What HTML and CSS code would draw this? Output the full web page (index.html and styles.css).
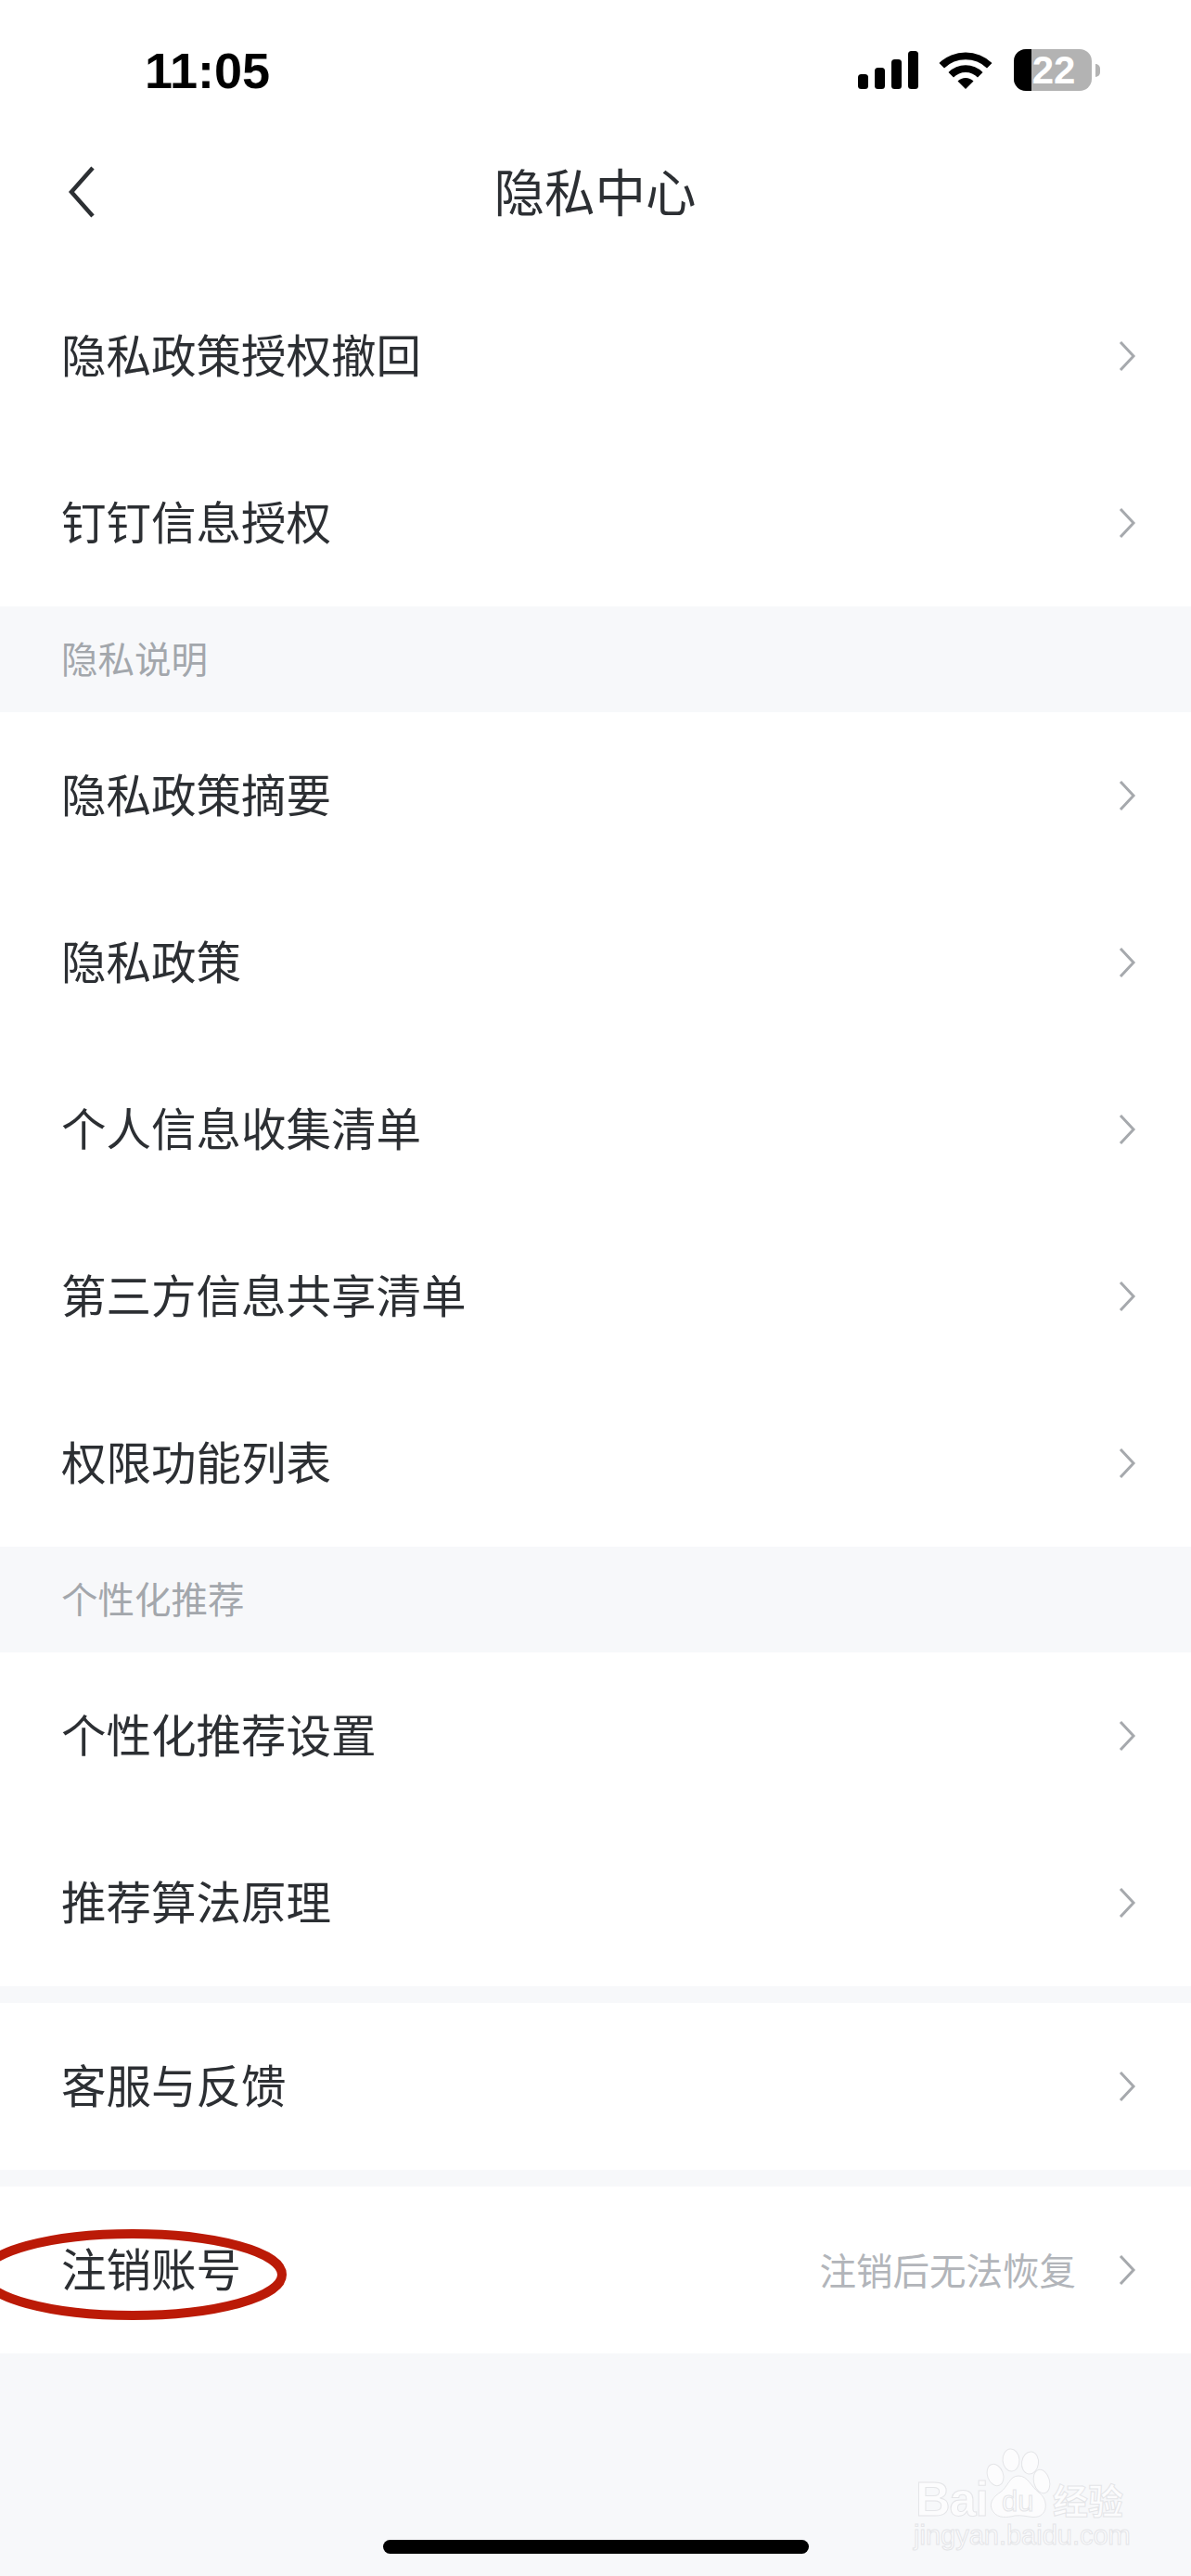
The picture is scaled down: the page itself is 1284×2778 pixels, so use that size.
FILE: index.html
```html
<!DOCTYPE html>
<html lang="zh-CN">
<head>
<meta charset="utf-8">
<title>隐私中心</title>
<link rel="stylesheet" href="styles.css">
</head>
<body>
<div class="page">
  <header class="status">
    <span class="time">11:05</span>
    <div class="status-icons">
      <svg class="signal" width="65" height="41" viewBox="0 0 65 41"><rect x="0" y="25" width="11" height="16" rx="3.5"/><rect x="18" y="18" width="11" height="23" rx="3.5"/><rect x="36" y="9" width="11" height="32" rx="3.5"/><rect x="54" y="0" width="11" height="41" rx="3.5"/></svg>
      <svg class="wifi" width="58" height="42" viewBox="0 0 58 42"><path d="M0.5 14 A41 41 0 0 1 57.5 14 L52 19.5 A33 33 0 0 0 6 19.5 Z"/><path d="M10.5 24 A26 26 0 0 1 47.500 24 L42 29.500 A18 18 0 0 0 16 29.500 Z"/><path d="M20.500 33.500 A12 12 0 0 1 37.500 33.500 L29 42 Z"/></svg>
      <div class="battery"><div class="battery-body"><div class="battery-fill"></div><span class="battery-text">22</span></div><div class="battery-nub"></div></div>
    </div>
  </header>
  <nav class="navbar">
    <svg class="back" width="30" height="56" viewBox="0 0 30 56"><path d="M27 2 L4 28 L27 54"/></svg>
    <h1 class="title">隐私中心</h1>
    <span></span>
  </nav>

  <section class="group">
    <div class="row"><span class="label">隐私政策授权撤回</span><svg class="chev" width="20" height="32" viewBox="0 0 20 32"><path d="M3 1 L17 16 L3 31"/></svg></div>
    <div class="row"><span class="label">钉钉信息授权</span><svg class="chev" width="20" height="32" viewBox="0 0 20 32"><path d="M3 1 L17 16 L3 31"/></svg></div>
  </section>
  <div class="section-title">隐私说明</div>
  <section class="group">
    <div class="row"><span class="label">隐私政策摘要</span><svg class="chev" width="20" height="32" viewBox="0 0 20 32"><path d="M3 1 L17 16 L3 31"/></svg></div>
    <div class="row"><span class="label">隐私政策</span><svg class="chev" width="20" height="32" viewBox="0 0 20 32"><path d="M3 1 L17 16 L3 31"/></svg></div>
    <div class="row"><span class="label">个人信息收集清单</span><svg class="chev" width="20" height="32" viewBox="0 0 20 32"><path d="M3 1 L17 16 L3 31"/></svg></div>
    <div class="row"><span class="label">第三方信息共享清单</span><svg class="chev" width="20" height="32" viewBox="0 0 20 32"><path d="M3 1 L17 16 L3 31"/></svg></div>
    <div class="row"><span class="label">权限功能列表</span><svg class="chev" width="20" height="32" viewBox="0 0 20 32"><path d="M3 1 L17 16 L3 31"/></svg></div>
  </section>
  <div class="section-title">个性化推荐</div>
  <section class="group">
    <div class="row"><span class="label">个性化推荐设置</span><svg class="chev" width="20" height="32" viewBox="0 0 20 32"><path d="M3 1 L17 16 L3 31"/></svg></div>
    <div class="row"><span class="label">推荐算法原理</span><svg class="chev" width="20" height="32" viewBox="0 0 20 32"><path d="M3 1 L17 16 L3 31"/></svg></div>
  </section>
  <section class="group gap">
    <div class="row"><span class="label">客服与反馈</span><svg class="chev" width="20" height="32" viewBox="0 0 20 32"><path d="M3 1 L17 16 L3 31"/></svg></div>
  </section>
  <section class="group gap annotated">
    <div class="row"><span class="label">注销账号</span><span class="hint">注销后无法恢复</span><svg class="chev" width="20" height="32" viewBox="0 0 20 32"><path d="M3 1 L17 16 L3 31"/></svg></div>
    <svg class="circle" width="320" height="110" viewBox="0 0 320 110"><ellipse cx="143" cy="49" rx="161" ry="44"/></svg>
  </section>

  <div class="watermark">
    <svg class="paw" width="70" height="74" viewBox="0 0 70 74">
      <ellipse cx="26" cy="12" rx="9" ry="12" transform="rotate(-4 26 12)"/>
      <ellipse cx="46.500" cy="15" rx="9" ry="12" transform="rotate(8 46.500 15)"/>
      <ellipse cx="9" cy="28" rx="8.500" ry="12" transform="rotate(-20 9 28)"/>
      <ellipse cx="59" cy="35" rx="8.500" ry="13" transform="rotate(-15 59 35)"/>
      <path d="M34 29 C44 29 47 40 56 47 C67 55 66 74 50 73.500 C42 73 38 71 30 72 C22 74 12 75 7 68 C1 60 6 52 14 47 C23 41 24 29 34 29 Z"/>
    </svg>
    <span class="wm-bai">Bai</span>
    <span class="wm-du">du</span>
    <span class="wm-jy">经验</span>
    <span class="wm-url">jingyan.baidu.com</span>
  </div>
  <div class="home"></div>
</div>
</body>
</html>
```
FILE: styles.css
```css
* { box-sizing: border-box; }
html, body { margin: 0; padding: 0; }
body { background: #f7f8fa; font-family: "Noto Sans CJK SC", "Liberation Sans", sans-serif; color: #2c2f33; }
.page { position: relative; width: 1284px; height: 2778px; overflow: hidden; }

.status { height: 120px; background: #fff; padding: 50px 98px 0 156px; display: flex; justify-content: space-between; align-items: flex-start; }
.time { font: 700 54px/52px "Liberation Sans", sans-serif; color: #000; }
.status-icons { display: flex; align-items: flex-start; margin-top: 3px; }
.signal { fill: #000; margin: 2px 22px 0 0; }
.wifi { fill: #000; margin: 1px 23px 0 0; }
.battery { display: flex; align-items: center; }
.battery-body { width: 84px; height: 45px; border-radius: 13px; background: #b3b3b3; overflow: hidden; display: flex; }
.battery-fill { width: 19px; background: #000; }
.battery-text { width: 48px; font: 700 42px/45px "Liberation Sans", sans-serif; color: #fff; text-align: center; }
.battery-nub { width: 5px; height: 14px; margin-left: 4px; background: #b3b3b3; border-radius: 0 7px 7px 0; }

.navbar { height: 174px; background: #fff; padding: 0 0 0 73px; display: grid; grid-template-columns: 1fr auto 1fr; align-items: center; }
.back { fill: none; stroke: #2c2f33; stroke-width: 4.500; }
.title { margin: 0 0 0 -74px; font-size: 54.500px; font-weight: 400; line-height: 78px; position: relative; top: -2px; }

.group { background: #fff; }
.gap { margin-top: 18px; }
.annotated { position: relative; }
.row { height: 180px; display: flex; align-items: center; padding: 0 59px 0 66px; }
.label { flex: 1; font-size: 48.500px; line-height: 70px; margin-top: -7px; }
.hint { font-size: 39.500px; line-height: 60px; color: #b2b5ba; margin: -3px 45px 0 0; }
.chev { fill: none; stroke: #a6a9ad; stroke-width: 3; }
.section-title { height: 114px; padding-left: 66px; font-size: 39.500px; line-height: 110px; color: #a3a7ac; }

.circle { position: absolute; left: 0; top: 46px; fill: none; stroke: #bb1a07; stroke-width: 10; }

.watermark { position: absolute; left: 980px; top: 2630px; width: 250px; height: 130px; }
.watermark span { position: absolute; color: #fcfcfd; -webkit-text-stroke: 1px #e4e5e8; white-space: nowrap; }
.paw { position: absolute; left: 84px; top: 11px; overflow: visible; fill: #fcfcfd; stroke: #e4e5e8; stroke-width: 1; }
.wm-bai { left: 7px; top: 43px; font: 700 52px/44px "Liberation Sans", sans-serif; letter-spacing: -1px; }
.wm-du { left: 100px; top: 49px; font: 400 31px/38px "Liberation Sans", sans-serif; }
.wm-jy { left: 155px; top: 42px; font: 700 38px/46px "Noto Sans CJK SC", sans-serif; }
.wm-url { left: 5px; top: 89px; font: 400 29px/30px "Liberation Sans", sans-serif; }

.home { position: absolute; left: 413px; top: 2739px; width: 459px; height: 15px; border-radius: 8px; background: #000; }
```
